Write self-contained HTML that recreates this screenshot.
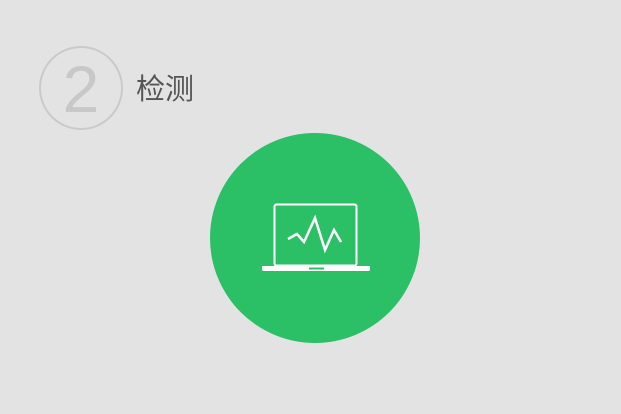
<!DOCTYPE html>
<html><head><meta charset="utf-8"><style>
html,body{margin:0;padding:0;width:621px;height:414px;background:#e3e3e3;overflow:hidden;position:relative}
.c{position:absolute;left:39px;top:46px;width:84px;height:84px;border:2px solid #cacaca;border-radius:50%;box-sizing:border-box}
.n{position:absolute;left:39px;top:51px;width:84px;text-align:center;font:300 66px/76px "Liberation Sans",sans-serif;color:#c8c8c8}
.t{position:absolute;left:136px;top:73px;font:29px/34px "Liberation Sans","Noto Sans CJK SC",sans-serif;color:#555}
</style></head><body>
<div class="c"></div><div class="n">2</div>
<div class="t">检测</div>
<svg width="621" height="414" style="position:absolute;left:0;top:0">
<circle cx="315" cy="238" r="105" fill="#2bc065"/>
<rect x="274.5" y="204.5" width="82" height="61" rx="2" fill="none" stroke="#fff" stroke-width="2"/>
<path d="M262 266 H370 V269 Q370 271 368 271 H264 Q262 271 262 269Z" fill="#fff"/>
<rect x="309" y="267.5" width="15" height="2" fill="#2bc065"/>
<polyline points="288,239 297,234 304,242 315,218 325,250 334,230 341,242" fill="none" stroke="#fff" stroke-width="2.5" stroke-linejoin="miter"/>
</svg>
</body></html>
